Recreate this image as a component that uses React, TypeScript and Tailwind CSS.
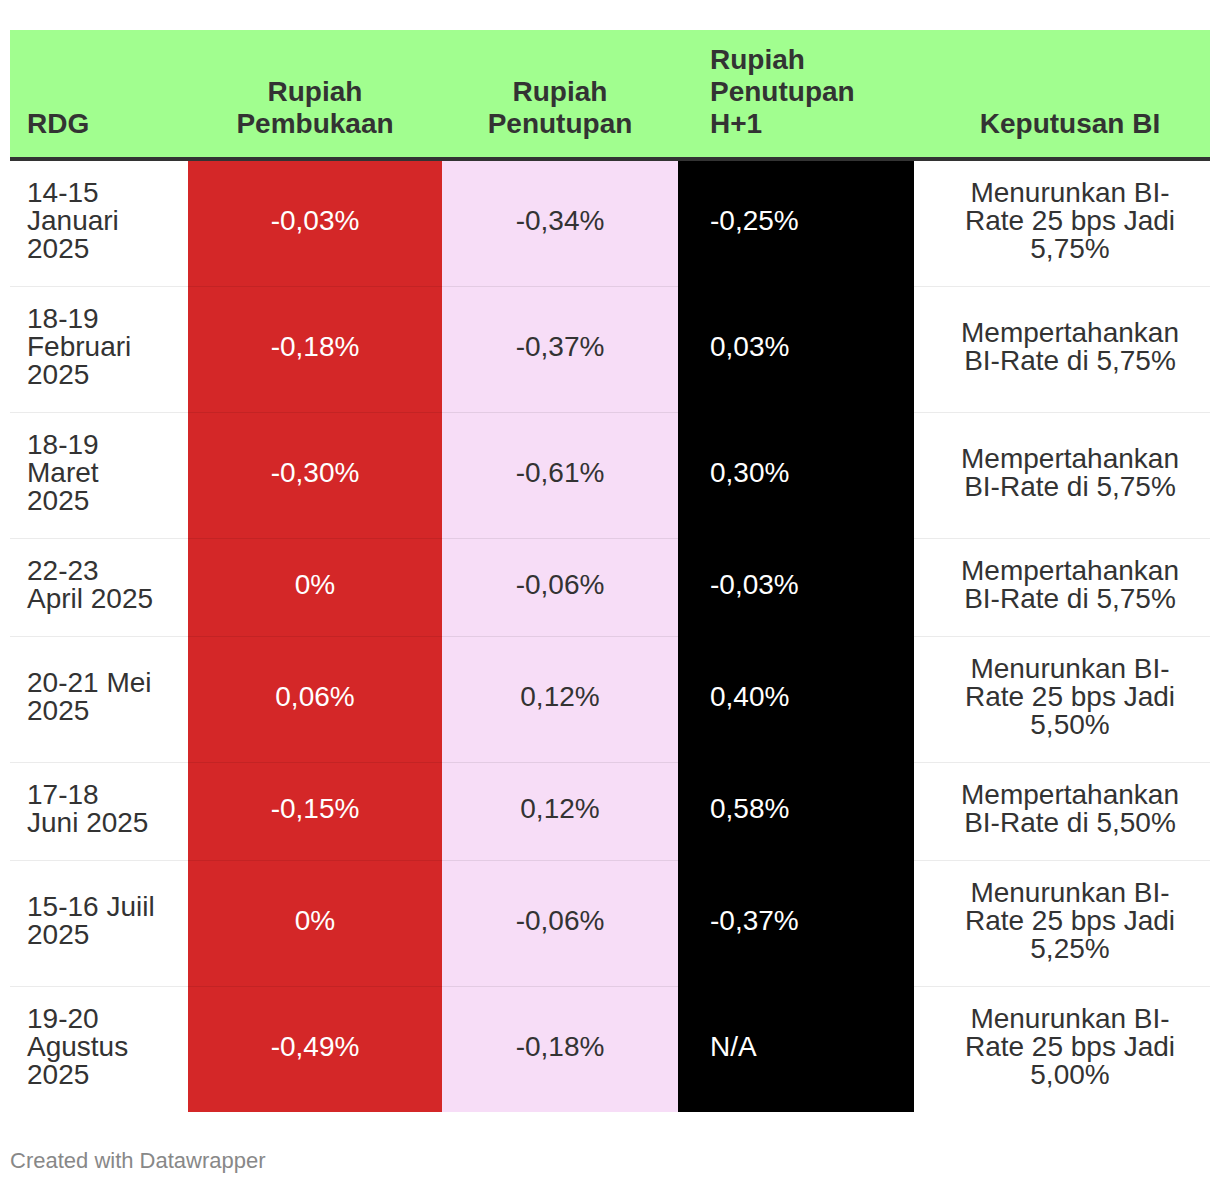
import React from "react";

type Row = {
  rdg: string;
  buka: string;
  tutup: string;
  h1: string;
  keputusan: string;
};

const rows: Row[] = [
  { rdg: "14-15 Januari 2025", buka: "-0,03%", tutup: "-0,34%", h1: "-0,25%", keputusan: "Menurunkan BI-Rate 25 bps Jadi 5,75%" },
  { rdg: "18-19 Februari 2025", buka: "-0,18%", tutup: "-0,37%", h1: "0,03%", keputusan: "Mempertahankan BI-Rate di 5,75%" },
  { rdg: "18-19 Maret 2025", buka: "-0,30%", tutup: "-0,61%", h1: "0,30%", keputusan: "Mempertahankan BI-Rate di 5,75%" },
  { rdg: "22-23 April 2025", buka: "0%", tutup: "-0,06%", h1: "-0,03%", keputusan: "Mempertahankan BI-Rate di 5,75%" },
  { rdg: "20-21 Mei 2025", buka: "0,06%", tutup: "0,12%", h1: "0,40%", keputusan: "Menurunkan BI-Rate 25 bps Jadi 5,50%" },
  { rdg: "17-18 Juni 2025", buka: "-0,15%", tutup: "0,12%", h1: "0,58%", keputusan: "Mempertahankan BI-Rate di 5,50%" },
  { rdg: "15-16 Juiil 2025", buka: "0%", tutup: "-0,06%", h1: "-0,37%", keputusan: "Menurunkan BI-Rate 25 bps Jadi 5,25%" },
  { rdg: "19-20 Agustus 2025", buka: "-0,49%", tutup: "-0,18%", h1: "N/A", keputusan: "Menurunkan BI-Rate 25 bps Jadi 5,00%" },
];

export default function App() {
  return (
    <div
      className="bg-white w-[1220px] min-h-[1184px] pt-[30px] px-[10px]"
      style={{ fontFamily: '"Liberation Sans", Arial, Helvetica, sans-serif' }}
    >
      <table className="table-fixed border-collapse w-[1200px] text-[#333333]">
        <colgroup>
          <col className="w-[178px]" />
          <col className="w-[254px]" />
          <col className="w-[236px]" />
          <col className="w-[236px]" />
          <col className="w-[296px]" />
        </colgroup>
        <thead>
          <tr className="bg-[#a1fe8f]">
            <th className="align-bottom text-left font-bold text-[28px] leading-[32px] pt-[14px] pb-[17px] pl-[17px] pr-[32px] border-b-[4px] border-[#333333]">
              RDG
            </th>
            <th className="align-bottom text-center font-bold text-[28px] leading-[32px] pt-[14px] pb-[17px] px-[10px] border-b-[4px] border-[#333333]">
              Rupiah Pembukaan
            </th>
            <th className="align-bottom text-center font-bold text-[28px] leading-[32px] pt-[14px] pb-[17px] px-[10px] border-b-[4px] border-[#333333]">
              Rupiah Penutupan
            </th>
            <th className="align-bottom text-left font-bold text-[28px] leading-[32px] pt-[14px] pb-[17px] pl-[32px] pr-[32px] border-b-[4px] border-[#333333]">
              Rupiah Penutupan H+1
            </th>
            <th className="align-bottom text-center font-bold text-[28px] leading-[32px] pt-[14px] pb-[17px] pl-[41px] pr-[25px] border-b-[4px] border-[#333333]">
              Keputusan BI
            </th>
          </tr>
        </thead>
        <tbody>
          {rows.map((r, i) => {
            const last = i === rows.length - 1;
            const b = last ? "" : "border-b border-[rgba(0,0,0,0.08)]";
            return (
              <tr key={i}>
                <td className={`align-middle text-left text-[28px] leading-[28px] pt-[18px] pb-[23px] pl-[17px] pr-[32px] bg-white ${b}`}>
                  {r.rdg}
                </td>
                <td className={`align-middle text-center text-[28px] leading-[28px] pt-[18px] pb-[23px] px-[10px] bg-[#d42728] text-white ${b}`}>
                  {r.buka}
                </td>
                <td className={`align-middle text-center text-[28px] leading-[28px] pt-[18px] pb-[23px] px-[10px] bg-[#f7ddf7] ${b}`}>
                  {r.tutup}
                </td>
                <td className={`align-middle text-left text-[28px] leading-[28px] pt-[18px] pb-[23px] pl-[32px] pr-[32px] bg-black text-white ${b}`}>
                  {r.h1}
                </td>
                <td className={`align-middle text-center text-[28px] leading-[28px] pt-[18px] pb-[23px] pl-[41px] pr-[25px] bg-white ${b}`}>
                  {r.keputusan}
                </td>
              </tr>
            );
          })}
        </tbody>
      </table>
      <div className="mt-[36px] text-[22px] leading-[26px] text-[#888888]">
        Created with Datawrapper
      </div>
    </div>
  );
}
